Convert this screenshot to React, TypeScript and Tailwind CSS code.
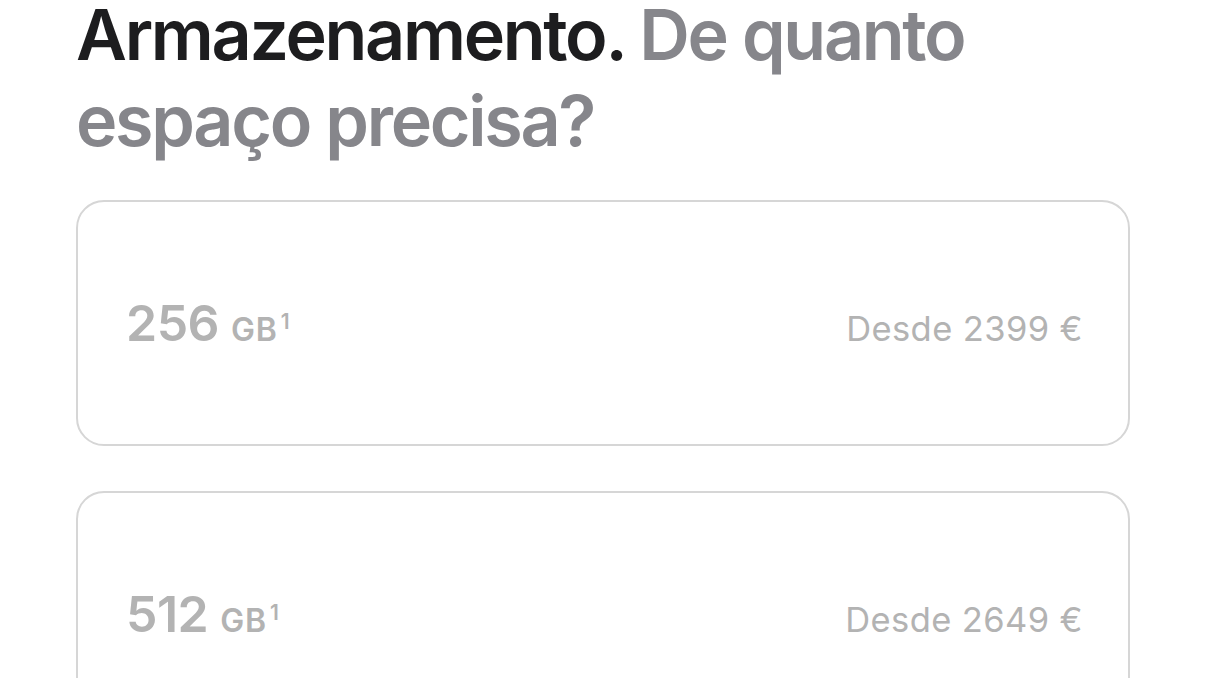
const options = [
  { size: "256", price: "Desde 2399 €" },
  { size: "512", price: "Desde 2649 €" },
]

function StorageOption({ size, price }: { size: string; price: string }) {
  return (
    <button className="flex h-[246px] w-full items-center rounded-[28px] border-2 border-[#d6d6d6] bg-white pl-[48px] pr-[45px] text-left">
      <div className="flex w-full items-baseline justify-between">
        <span className="flex items-baseline font-semibold text-[#b3b3b3]">
          <span className="text-[50px] tracking-[-0.5px]">{size}</span>
          <span className="ml-[12px] text-[32px] tracking-[0.8px]">GB</span>
          <sup className="top-[-0.55em] ml-[3px] text-[21px] font-semibold">1</sup>
        </span>
        <span className="mt-[4px] text-[34.5px] tracking-[0.4px] text-[#b3b3b3]">{price}</span>
      </div>
    </button>
  )
}

export default function App() {
  return (
    <div className="min-h-screen overflow-hidden bg-white px-[76px] font-['Inter','Liberation_Sans',sans-serif]">
      <h2 className="-mt-[8px] text-[70px] font-semibold leading-[86px] tracking-[-2.3px]">
        <span className="text-[#1d1d1f]">Armazenamento.</span>{" "}
        <span className="text-[#86868b]">De quanto espaço precisa?</span>
      </h2>
      <div className="mt-[36px] flex flex-col gap-[45px]">
        {options.map((o) => (
          <StorageOption key={o.size} {...o} />
        ))}
      </div>
    </div>
  )
}
